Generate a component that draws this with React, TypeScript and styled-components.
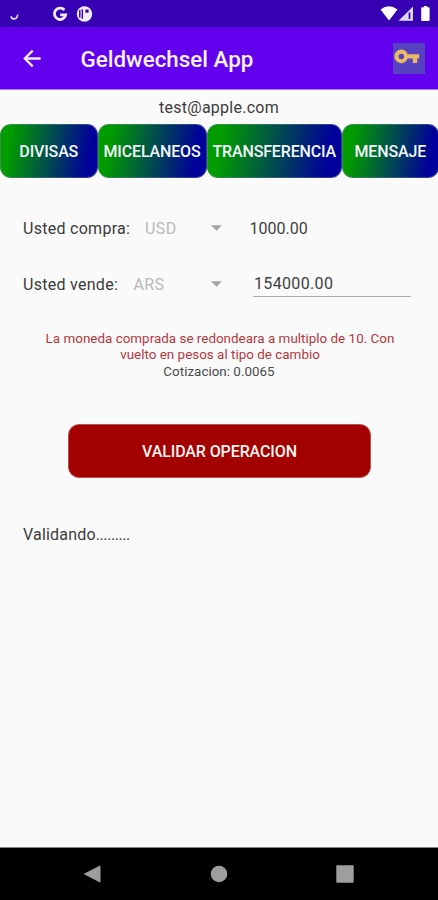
import React from "react";
import styled, { createGlobalStyle } from "styled-components";

const GlobalStyle = createGlobalStyle`
  * { box-sizing: border-box; }
  body { margin: 0; background: #fafafa; font-family: Roboto, "Noto Sans", sans-serif; }
`;

const Screen = styled.div`
  width: 438px;
  height: 900px;
  display: flex;
  flex-direction: column;
  overflow: hidden;
  background: #fafafa;
  color: #3c3c3c;
`;

const StatusBar = styled.div`
  height: 27px;
  flex: none;
  display: flex;
  justify-content: space-between;
  background: #3700b3;
  svg { display: block; }
`;

const AppBar = styled.header`
  height: 63px;
  flex: none;
  display: flex;
  align-items: center;
  padding: 0 13px 0 20px;
  background: #6200ee;
  border-bottom: 1px solid #a878f5;
`;

const BackButton = styled.button`
  width: 24px;
  height: 24px;
  padding: 0;
  border: 0;
  background: none;
  svg { display: block; }
`;

const Title = styled.h1`
  margin: 2px auto 0 36.5px;
  font-size: 22.4px;
  line-height: 28px;
  font-weight: 500;
  color: #f7f1ff;
`;

const KeyButton = styled.button`
  width: 32px;
  height: 31px;
  padding: 0;
  border: 0;
  background: #5641c1;
  svg { display: block; }
`;

const Email = styled.div`
  height: 34px;
  line-height: 35px;
  text-align: center;
  font-size: 16px;
  letter-spacing: 0.25px;
`;

const Tabs = styled.nav`
  display: grid;
  grid-template-columns: 97.5px 109px 135.5px 96.5px;
  height: 54px;
`;

const Tab = styled.button`
  padding: 2px 0 0;
  border: 1px solid rgba(110, 130, 150, 0.45);
  border-radius: 11px;
  background: linear-gradient(100deg, #009c00 12%, #00009b 88%) border-box;
  color: #f4f8fa;
  font: 500 16px/20px Roboto, sans-serif;
  letter-spacing: -0.15px;
  white-space: nowrap;
`;

const Form = styled.main`
  flex: 1;
  padding: 22px 23px 0;
`;

const Row = styled.div<{ $labelWidth: number; $gap: number }>`
  display: grid;
  grid-template-columns: ${(p) => p.$labelWidth}px ${(p) => 203 - p.$labelWidth}px 1fr;
  height: 56px;
  align-items: center;
  font-size: 16px;
  > :last-child { margin-left: ${(p) => p.$gap}px; }
`;

const Label = styled.label`
  white-space: nowrap;
  letter-spacing: 0.28px;
  color: #3a3a3a;
`;

const Spinner = styled.div`
  display: flex;
  align-items: center;
  justify-content: space-between;
  padding-right: 4px;
  letter-spacing: 0.4px;
  color: #b9b9b9;
`;

const Amount = styled.div`
  color: #3f3f3f;
`;

const AmountField = styled.div`
  width: 158px;
  height: 27px;
  margin-top: -1px;
  line-height: 27px;
  padding-left: 1px;
  border-bottom: 1px solid #adadad;
  color: #3f3f3f;
  letter-spacing: 0.35px;
`;

const Hint = styled.p`
  width: 372px;
  margin: 19px auto 0 11px;
  font-size: 13.4px;
  line-height: 16px;
  letter-spacing: 0.02px;
  text-align: center;
  color: #b4373c;
`;

const Rate = styled.div`
  font-size: 13.4px;
  line-height: 17px;
  letter-spacing: 0.02px;
  text-align: center;
  color: #4a4a4a;
`;

const Submit = styled.button`
  display: block;
  width: 303px;
  height: 54px;
  margin: 44px 0 0 45px;
  padding: 2px 0 0;
  border: 1px solid #bc5050;
  border-radius: 11px;
  background: #a30000;
  color: #fff4f1;
  font: 500 16px/20px Roboto, sans-serif;
  letter-spacing: -0.1px;
`;

const Status = styled.div`
  margin-top: 47px;
  font-size: 16px;
  line-height: 20px;
  letter-spacing: 0.2px;
`;

const Dots = styled.span`
  letter-spacing: -0.45px;
`;

const NavBar = styled.footer`
  height: 53px;
  flex: none;
  display: flex;
  align-items: center;
  justify-content: space-between;
  padding: 0 84px 0 83px;
  background: #000;
  border-top: 1px solid #858585;
`;

const Caret = () => (
  <svg width="11" height="6" viewBox="0 0 11 6"><path d="M0 .3h11L5.5 5.8z" fill="#a5a5a5" /></svg>
);

export default function App() {
  return (
    <>
      <GlobalStyle />
      <Screen>
        <StatusBar>
          <svg width="100" height="27" viewBox="0 0 100 27" fill="none">
            <path d="M11 16.2c.8 3.7 6 4 6.7-1.5" stroke="#ddd3f5" strokeWidth="1.7" />
            <path d="M64.4 10A5.7 5.7 0 1 0 65.7 14.8H60.2" stroke="#f2edfb" strokeWidth="2.8" />
            <circle cx="84.5" cy="14" r="7.7" fill="#f2edfb" />
            <path d="M79.8 10v7.8M82.3 9.3v9.4" stroke="#3700b3" strokeWidth="1.4" />
            <path d="M85.4 9.5h3.2v3.2h-3.2z" fill="#3700b3" />
          </svg>
          <svg width="64" height="27" viewBox="374 0 64 27">
            <path d="M380.5 9.4Q389 3.2 397.5 9.4L389 20.5z" fill="#fff" />
            <path d="M398.5 20.7L413 6.5v14.2z" fill="#ded7f5" />
            <path d="M409.5 12.5v6.5" stroke="#3700b3" strokeWidth="1.7" />
            <path d="M422.2 7.2h1.8V6h3.2v1.2h1.6q.8 0 .8.8v12q0 1-1 1h-6.4q-1 0-1-1V8q0-.8 1-.8z" fill="#fff" />
          </svg>
        </StatusBar>
        <AppBar>
          <BackButton aria-label="Volver">
            <svg width="24" height="24" viewBox="0 0 24 24" fill="none" stroke="#f3ebff" strokeWidth="2.3">
              <path d="M20.6 12.5H4.9M12.7 4.6l-7.9 7.9 7.9 7.9" />
            </svg>
          </BackButton>
          <Title>Geldwechsel App</Title>
          <KeyButton aria-label="Clave">
            <svg width="32" height="31" viewBox="0 0 32 31">
              <path fill="#e7b965" fillRule="evenodd" d="M8.3 6.6a6.8 6.8 0 0 1 6.3 4.6H26.2v4.2h-2V20h-4.4v-4.6h-5.2A6.8 6.8 0 1 1 8.3 6.6zm0 4.2a2.7 2.7 0 1 0 0 5.4 2.7 2.7 0 0 0 0-5.4z" />
            </svg>
          </KeyButton>
        </AppBar>
        <Email>test@apple.com</Email>
        <Tabs>
          <Tab>DIVISAS</Tab>
          <Tab>MICELANEOS</Tab>
          <Tab>TRANSFERENCIA</Tab>
          <Tab>MENSAJE</Tab>
        </Tabs>
        <Form>
          <Row $labelWidth={122} $gap={23.5}>
            <Label>Usted compra:</Label>
            <Spinner>USD<Caret /></Spinner>
            <Amount>1000.00</Amount>
          </Row>
          <Row $labelWidth={110.5} $gap={27}>
            <Label>Usted vende:</Label>
            <Spinner>ARS<Caret /></Spinner>
            <AmountField>154000.00</AmountField>
          </Row>
          <Hint>La moneda comprada se redondeara a multiplo de 10. Con<br />vuelto en pesos al tipo de cambio</Hint>
          <Rate>Cotizacion: 0.0065</Rate>
          <Submit>VALIDAR OPERACION</Submit>
          <Status>Validando<Dots>.........</Dots></Status>
        </Form>
        <NavBar>
          <svg width="18" height="18" viewBox="0 0 18 18"><path d="M17 1v16L1.5 9z" fill="#9e9e9e" stroke="#9e9e9e" strokeLinejoin="round" /></svg>
          <svg width="18" height="18" viewBox="0 0 18 18"><circle cx="9" cy="9" r="8.3" fill="#9e9e9e" /></svg>
          <svg width="18" height="18" viewBox="0 0 18 18"><rect x=".3" y=".3" width="17.4" height="17.4" rx="1" fill="#9e9e9e" /></svg>
        </NavBar>
      </Screen>
    </>
  );
}
